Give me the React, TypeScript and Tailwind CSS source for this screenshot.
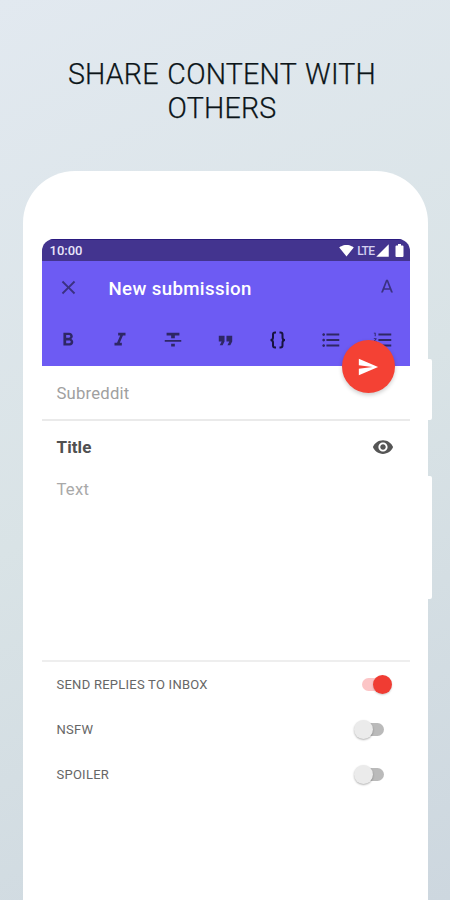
import {
  MdClose,
  MdFormatBold,
  MdFormatItalic,
  MdFormatListBulleted,
  MdFormatListNumbered,
  MdFormatQuote,
  MdFormatStrikethrough,
  MdSend,
  MdSignalCellular4Bar,
  MdSignalWifi4Bar,
  MdVisibility,
} from "react-icons/md";

const options = [
  { label: "SEND REPLIES TO INBOX", on: true },
  { label: "NSFW", on: false },
  { label: "SPOILER", on: false },
];

function Battery() {
  return (
    <svg width="9" height="13" viewBox="0 0 9 13" fill="currentColor" className="ml-[5px]">
      <path d="M3 0h3v1.5h1.5q1 0 1 1V12q0 1-1 1h-6q-1 0-1-1V2.500q0-1 1-1H3z" />
    </svg>
  );
}

function Braces() {
  return (
    <svg width="22" height="22" viewBox="0 0 22 22" fill="none" stroke="#17133f" strokeWidth="2">
      <path d="M9 3.5H8Q6 3.5 6 5.500V8.500Q6 11 3.500 11Q6 11 6 13.500V16.500Q6 18.500 8 18.500H9" />
      <path d="M12.500 3.500H13.500Q15.500 3.500 15.500 5.500V8.500Q15.500 11 18 11Q15.500 11 15.500 13.500V16.500Q15.500 18.500 13.500 18.500H12.500" />
    </svg>
  );
}

function LetterA() {
  return (
    <svg width="22" height="22" viewBox="0 0 24 24" fill="#3b3182">
      <path d="M11 3L5.5 17h2.1l1.15-3h6.5l1.15 3h2.1L13 3h-2zm-1.6 9.3L12 5.2l2.6 7.1H9.4z" />
    </svg>
  );
}

function Toggle({ on }: { on: boolean }) {
  if (on) {
    return (
      <div className="flex h-[20px] w-[31px] items-center justify-end">
        <div className="-mr-[12px] h-[13px] w-[23px] rounded-full bg-[#fcc5c6]" />
        <div className="size-[19px] rounded-full bg-[#f03c33] shadow-[0_1px_2px_rgba(0,0,0,0.2)]" />
      </div>
    );
  }
  return (
    <div className="mr-[7px] flex h-[20px] w-[31px] items-center">
      <div className="z-10 size-[19px] shrink-0 rounded-full bg-[#ebebeb] shadow-[0_1px_2px_rgba(0,0,0,0.3)]" />
      <div className="-ml-[11px] h-[13px] w-[22px] shrink-0 rounded-full bg-[#bababa]" />
    </div>
  );
}

function StatusBar() {
  return (
    <div className="flex h-[22px] items-center justify-between border-t border-[#2a1a80] bg-[#43348f] pr-[6px] pl-[8px] text-white">
      <span className="text-[13px] leading-none font-medium text-[#e9e6fa]">10:00</span>
      <div className="flex items-center">
        <MdSignalWifi4Bar size={15} />
        <span className="ml-[3px] text-[12px] leading-none font-medium tracking-[-0.6px] text-[#d5d0f0]">LTE</span>
        <MdSignalCellular4Bar size={15} />
        <Battery />
      </div>
    </div>
  );
}

function Header() {
  return (
    <div className="relative bg-[#6d5bf3]">
      <div className="flex h-[53px] items-center pr-[12px] pl-[15px]">
        <MdClose size={23} className="text-[#3b3182]" />
        <h2 className="ml-[29px] flex-1 pt-[3px] text-[18.7px] font-medium tracking-[0.35px] text-white">New submission</h2>
        <LetterA />
      </div>
      <div className="grid h-[52px] grid-cols-7 place-items-center text-[#2e2765]">
        <MdFormatBold size={22} />
        <MdFormatItalic size={22} />
        <MdFormatStrikethrough size={22} />
        <MdFormatQuote size={23} />
        <Braces />
        <MdFormatListBulleted size={22} />
        <MdFormatListNumbered size={22} />
      </div>
      <button className="absolute right-[15px] -bottom-[27px] flex size-[53px] items-center justify-center rounded-full bg-[#f44134] text-white shadow-[0_2px_4px_rgba(0,0,0,0.2)]">
        <MdSend size={22} />
      </button>
    </div>
  );
}

export default function App() {
  return (
    <div className="flex h-[900px] w-[450px] flex-col overflow-hidden bg-linear-155 from-[#e2e9f0] via-[#d9e3e6] to-[#cdd7df] font-['Roboto',sans-serif]">
      <h1 className="h-[171px] pt-[57px] text-center text-[28.6px] leading-[34px] font-light tracking-[0.2px] text-[#0c1519] [-webkit-text-stroke:0.25px_#0c1519] [word-spacing:1.5px]">
        <span className="block pr-[6px]">SHARE CONTENT WITH</span>
        <span className="block pr-[6px]">OTHERS</span>
      </h1>
      <div className="relative ml-[23px] h-[729px] w-[404.5px] rounded-t-[52px] bg-white px-[18.5px] pt-[68px]">
        <div className="absolute top-[188px] -right-[4px] h-[61px] w-[6px] rounded-r-[2px] bg-white" />
        <div className="absolute top-[305px] -right-[4px] h-[123px] w-[6px] rounded-r-[2px] bg-white" />
        <div className="w-[368px]">
          <div className="overflow-hidden rounded-t-[12px]">
            <StatusBar />
          </div>
          <Header />
          <div className="flex h-[55px] items-center border-b-2 border-[#eaeaea] pt-[3px] pl-[15px] text-[16.7px] tracking-[0.2px] text-[#a0a0a0]">
            Subreddit
          </div>
          <div className="flex h-[54px] items-center justify-between pr-[16px] pl-[15px]">
            <span className="text-[17px] font-bold tracking-[0.1px] text-[#505050]">Title</span>
            <MdVisibility size={22} className="-mt-[3px] text-[#555]" />
          </div>
          <div className="h-[187px] border-b-2 border-[#eeeeee] pt-[2px] pl-[15px] text-[16.7px] tracking-[0.2px] text-[#a9a9a9]">
            Text
          </div>
          <div>
            {options.map(({ label, on }) => (
              <div key={label} className="flex h-[45px] items-center justify-between pr-[18px] pl-[15px]">
                <span className="text-[13px] tracking-[0.25px] text-[#666]">{label}</span>
                <Toggle on={on} />
              </div>
            ))}
          </div>
        </div>
      </div>
    </div>
  );
}
